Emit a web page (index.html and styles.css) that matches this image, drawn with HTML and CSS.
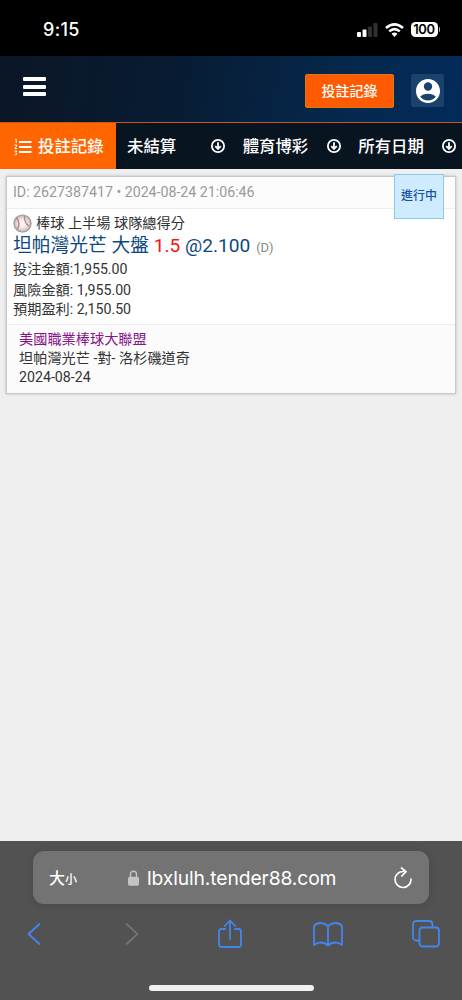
FILE: index.html
```html
<!DOCTYPE html>
<html lang="zh-Hant">
<head>
<meta charset="utf-8">
<meta name="viewport" content="width=device-width, initial-scale=1">
<title>投註記錄</title>
<link rel="stylesheet" href="styles.css">
</head>
<body>
<div class="phone">
  <div class="status">
    <span class="time">9:15</span>
    <div class="indicators">
      <svg class="signal" width="21" height="14" viewBox="0 0 21 14"><rect x="0" y="9" width="4" height="5" rx="1" fill="#fff"/><rect x="5.500" y="6.500" width="4" height="7.500" rx="1" fill="#fff"/><rect x="11" y="3.500" width="4" height="10.500" rx="1" fill="#303030"/><rect x="16.500" y="0" width="4" height="14" rx="1" fill="#303030"/></svg>
      <svg class="wifi" width="19" height="14" viewBox="0 0 19 14" fill="none" stroke="#fff" stroke-width="2.500"><path d="M1 5Q9.500-2.200 18 5M4.200 8.400Q9.500 3.900 14.800 8.400"/><path d="M6.500 10.700Q9.500 8.300 12.500 10.700L9.500 14Z" fill="#fff" stroke="none"/></svg>
      <span class="battery">100</span><i class="nub"></i>
    </div>
  </div>
  <header class="top">
    <div class="burger"><i></i><i></i><i></i></div>
    <div class="actions">
      <button class="record">投註記錄</button>
      <div class="account"><svg width="24" height="24" viewBox="2 2 20 20" fill="#fff"><path d="M12 2C6.480 2 2 6.480 2 12s4.480 10 10 10 10-4.480 10-10S17.520 2 12 2zm0 2.800a3.500 3.500 0 1 1 0 7 3.500 3.500 0 0 1 0-7zm0 15.200c-2.700 0-5-1.200-6.500-3.200 1.300-1.700 3.900-2.600 6.500-2.600s5.200.9 6.500 2.600C17 18.800 14.700 20 12 20z"/></svg></div>
    </div>
  </header>
  <nav class="tabs">
    <div class="tab active"><svg class="list" width="18" height="18" viewBox="0 0 18 18"><path d="M5 4H17.500M5 9H17.500M5 14H17.500" stroke="#fff" stroke-width="2"/><path d="M1 1.500L2.200 1V5M.5 7H2.700V8L.8 10.500H3M.6 13H2.700L1.800 14.500Q3 15 2.600 16.300Q1.800 17.200.5 16.500" fill="none" stroke="#fff"/></svg><span>投註記錄</span></div>
    <div class="tab"><span>未結算</span><svg class="down" width="14" height="14" viewBox="0 0 14 14"><circle cx="7" cy="7" r="6.100"/><path d="M7 3.200V10M4.200 7.200L7 10L9.800 7.200"/></svg></div>
    <div class="tab"><span>體育博彩</span><svg class="down" width="14" height="14" viewBox="0 0 14 14"><circle cx="7" cy="7" r="6.100"/><path d="M7 3.200V10M4.200 7.200L7 10L9.800 7.200"/></svg></div>
    <div class="tab"><span>所有日期</span><svg class="down" width="14" height="14" viewBox="0 0 14 14"><circle cx="7" cy="7" r="6.100"/><path d="M7 3.200V10M4.200 7.200L7 10L9.800 7.200"/></svg></div>
  </nav>
  <main class="page">
    <article class="card">
      <div class="badge">進行中</div>
      <div class="card-head">ID: 2627387417 • 2024-08-24 21:06:46</div>
      <div class="card-body">
        <div class="sport"><svg width="19" height="19" viewBox="0 0 19 19"><defs><radialGradient id="ball"><stop offset=".3" stop-color="#faf4f3"/><stop offset=".75" stop-color="#d8cdcd"/><stop offset="1" stop-color="#8d8587"/></radialGradient></defs><circle cx="9.500" cy="9.500" r="9.100" fill="url(#ball)"/><path d="M3.500 4Q8 9 4.500 15M11.500 2Q11 9 16 12" fill="none" stroke="#c27f76" stroke-width="1.300"/></svg><span>棒球 上半場 球隊總得分</span></div>
        <div class="pick">坦帕灣光芒 大盤 <span class="odds"><b>1.5</b> @2.100</span><small>(D)</small></div>
        <div class="line stake">投注金額:1,955.00</div>
        <div class="line risk">風險金額: 1,955.00</div>
        <div class="line win">預期盈利: 2,150.50</div>
      </div>
      <div class="match">
        <div class="league">美國職業棒球大聯盟</div>
        <div>坦帕灣光芒 -對- 洛杉磯道奇</div>
        <div>2024-08-24</div>
      </div>
    </article>
  </main>
  <footer class="browser">
    <div class="address">
      <span class="size">大<small>小</small></span>
      <div class="url"><svg width="11" height="16" viewBox="0 0 11 16"><rect y="6.700" width="11" height="9" rx="1.600" fill="#c4c4c7"/><path d="M2.500 7V4.200a3 3 0 0 1 6 0V7" fill="none" stroke="#c4c4c7" stroke-width="1.400"/></svg><span>lbxlulh.tender88.com</span></div>
      <svg class="reload" width="20" height="22" viewBox="0 0 20 22"><path d="M10.500 4.500A8 8 0 1 0 18 12M8.500 1L13 4.700L8.800 9"/></svg>
    </div>
    <div class="tools">
      <svg width="14" height="24" viewBox="0 0 14 24"><path d="M12.500 2L1.500 12L12.500 22"/></svg>
      <svg class="off" width="14" height="24" viewBox="0 0 14 24"><path d="M1.500 2L12.500 12L1.500 22"/></svg>
      <svg width="26" height="30" viewBox="0 0 26 30"><path d="M8 10H4.500Q2 10 2 12.500V25.500Q2 28 4.500 28H21.500Q24 28 24 25.500V12.500Q24 10 21.500 10H18M13 20V2M7.800 7L13 1.500L18.200 7"/></svg>
      <svg width="30" height="25" viewBox="0 0 30 25"><path d="M15 4Q11.500 1 7.500 1Q3.500 1 1 4V23Q4 20.500 7.500 20.500Q12 20.500 15 23.500Q18 20.500 22.500 20.500Q26 20.500 29 23V4Q26.500 1 22.500 1Q18.500 1 15 4V23"/></svg>
      <svg width="28" height="28" viewBox="0 0 28 28"><rect x="7.500" y="7.500" width="19.500" height="19" rx="3.200"/><path d="M7.500 20.500H4.500Q1 20.500 1 17V4.500Q1 1 4.500 1H17Q20.500 1 20.500 4.500V7.500"/></svg>
    </div>
    <div class="home"></div>
  </footer>
</div>
</body>
</html>
```
FILE: styles.css
```css
* { box-sizing: border-box; }
body { margin: 0; background: #efefef; font-family: Roboto, "Noto Sans CJK TC", sans-serif; }
svg { display: block; flex: none; }
.phone { width: 462px; height: 1000px; display: flex; flex-direction: column; overflow: hidden; }

.status { height: 56px; background: #000; color: #fff; display: flex; justify-content: space-between; padding: 3px 22px 0 43px; align-items: center; }
.time { font: 500 18px/22px Inter, sans-serif; letter-spacing: 0.3px; }
.indicators { display: flex; align-items: center; }
.signal { margin-right: 7px; }
.wifi { margin-right: 7px; }
.battery { width: 27px; height: 15px; border-radius: 4.500px; background: #fff; color: #000; font: 600 13px/15px Inter, sans-serif; text-align: center; letter-spacing: -0.3px; }
.nub { width: 1.500px; height: 5px; margin-left: 1px; border-radius: 0 2px 2px 0; background: #aaa; }

.top { height: 66px; background: linear-gradient(100deg, #0b1626 0%, #081c33 38%, #05294f 78%, #032b5a 100%); display: flex; justify-content: space-between; padding: 18px 18px 0 23px; }
.burger { width: 23px; height: 19px; display: flex; flex-direction: column; justify-content: space-between; margin-top: 3px; }
.burger i { height: 4px; border-radius: 1px; background: #fff; }
.actions { display: flex; gap: 17px; align-items: flex-start; }
.record { width: 89px; height: 34px; padding: 0; border: 1px solid #d77a18; border-radius: 2px; background: #ff5a00; color: #fff; font: 500 14px/30px Roboto, "Noto Sans CJK TC", sans-serif; }
.account { width: 33px; height: 33px; background: #1b426d; border-radius: 2px; display: grid; place-items: center; }

.tabs { height: 47px; border-top: 1px solid #c85719; background: #091421; color: #fff; display: grid; grid-template-columns: repeat(4, 115.6px); font-weight: 500; font-size: 16.4px; }
.tab { display: flex; align-items: center; justify-content: space-between; padding: 0 6px 0 11.5px; white-space: nowrap; }
.tab span { margin-top: -2px; }
.tab.active { background: #ff6501; justify-content: flex-start; padding-left: 14px; gap: 6px; }
.down { fill: none; stroke: #fff; stroke-width: 1.800; }
.list { margin-top: 2px; }

.page { flex: 1; padding: 7px 6px 0; background: #efefef; }
.card { position: relative; height: 218px; border: 1px solid #c8c8c8; background: #fff; box-shadow: 0 0 3px #bbb; color: #333; font-size: 14.2px; }
.card-head { height: 32px; padding-left: 6px; background: #fcfcfc; border-bottom: 1px solid #ededed; color: #999; line-height: 31px; font-size: 14.2px; white-space: nowrap; }
.badge { position: absolute; right: 11px; top: -3px; width: 50px; height: 45px; border: 1px solid #8cc8e8; background: #cfebff; color: #1451a3; font-size: 12px; font-weight: 500; line-height: 43px; text-align: center; }
.card-body { height: 115px; padding: 4px 6px 0; white-space: nowrap; }
.sport { display: flex; align-items: center; gap: 5px; height: 21px; }
.sport span { margin: -4px 0 0 -1px; }
.pick { height: 24px; line-height: 23px; color: #0d4780; font-size: 18.8px; }
.odds { font-size: 19.1px; }
.pick b { color: #f11; font-weight: 400; }
.pick small { color: #888; font-size: 13px; margin-left: 6px; }
.line { line-height: 20px; height: 20px; }
.stake { margin-top: 1px; }
.risk { margin-top: 1px; }
.win { margin-top: -1px; }
.match { height: 69px; padding: 5px 12px 0; background: #fbfbfb; border-top: 1px solid #ececf0; line-height: 19px; white-space: nowrap; }
.league { color: #891489; }

.browser { height: 159px; background: #525252; padding: 10px 33px 0; }
.address { width: 396px; height: 53px; border-radius: 11px; background: #737373; box-shadow: 0 1px 8px rgba(0, 0, 0, .12); color: #fff; display: flex; align-items: center; justify-content: space-between; padding: 0 16px 0 16px; }
.size { font: 500 16px/24px "Noto Sans CJK TC", sans-serif; width: 79px; }
.size small { font-size: 12px; }
.url { display: flex; flex: 1; align-items: center; gap: 8px; font: 400 19.3px/24px Inter, sans-serif; letter-spacing: -0.12px; white-space: nowrap; }
.reload { fill: none; stroke: #fff; stroke-width: 1.700; stroke-linecap: round; stroke-linejoin: round; }
.tools { height: 60px; margin: 0 -15px 0 -48px; display: grid; grid-template-columns: repeat(5, 98px); align-items: center; justify-items: center; }
.tools svg { fill: none; stroke: #4386ea; stroke-width: 1.800; stroke-linecap: round; stroke-linejoin: round; }
.tools .off { stroke: #737373; }
.home { width: 165px; height: 6px; margin: 21px auto 0; border-radius: 3px; background: #f0f0f0; }
```
